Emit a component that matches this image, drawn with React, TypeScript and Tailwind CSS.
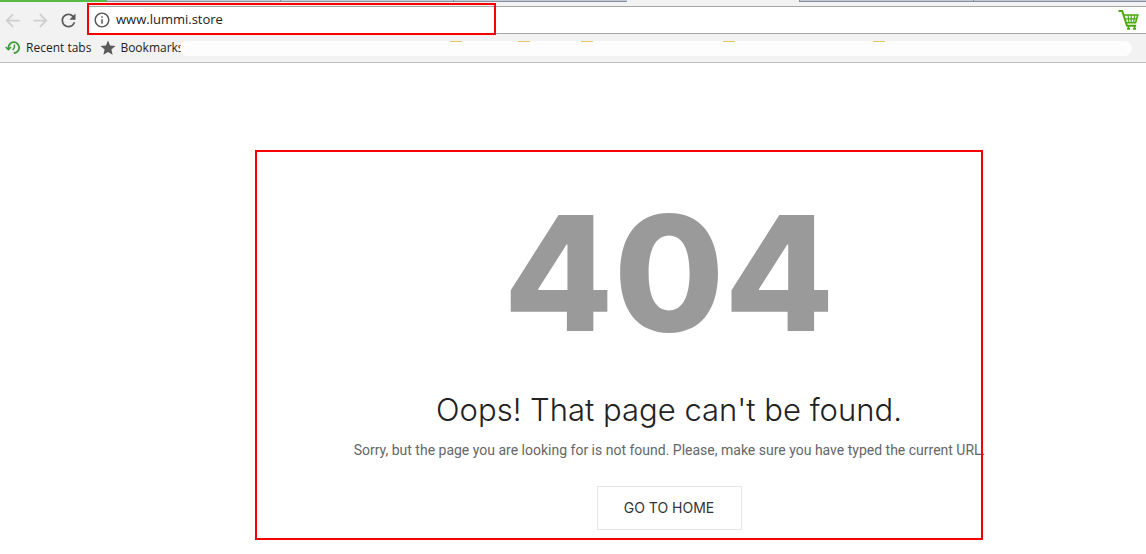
import React, { useState } from 'react';
import { MdArrowBack, MdArrowForward, MdInfoOutline, MdRefresh, MdStar } from 'react-icons/md';

const RecentIcon = () => (
  <svg className="h-4 w-4 shrink-0" viewBox="0 0 16 16" fill="none" stroke="#3f9a3a" strokeWidth="1.8" aria-hidden="true">
    <path d="M3.4 9V7.6A5.4 5.4 0 1 1 8.8 13" />
    <path d="M0.6 7L3.4 9.6L6 7" strokeWidth="1.5" />
    <path d="M9.4 4.6V7.6L7.6 10" strokeWidth="1.4" />
  </svg>
);

const CartIcon = () => (
  <svg className="h-[22px] w-[22px]" viewBox="0 0 22 22" fill="none" stroke="#4aa90c" strokeWidth="1.6" aria-hidden="true">
    <path d="M0.5 2H4.2L9 16.8H18.2" strokeWidth="2" />
    <path d="M5.5 6H19.8L17.6 13.8H8" />
    <path d="M6.6 9.8H18.6M10 6L11 13.8M13.2 6V13.8M16.6 6L15.6 13.8" strokeWidth="1.2" />
    <path d="M10.5 17V20.5M16.5 17V20.5M9 19.8H12M15 19.8H18" strokeWidth="1.8" />
  </svg>
);

const TabStrip = () => (
  <div className="flex h-[2px] bg-[#f2f2f2]">
    <div className="w-[107px] bg-[#58b947]" />
    <div className="w-[173px] border-b border-[#84909c] bg-[#c3cdd8]" />
    <div className="w-[173px] border-b border-l border-[#84909c] bg-[#c3cdd8]" />
    <div className="w-[174px] border-b border-l border-[#84909c] bg-[#c3cdd8]" />
    <div className="w-[172px]" />
    <div className="w-[174px] border-b border-l border-[#84909c] bg-[#c3cdd8]" />
    <div className="flex-1 border-b border-l border-[#84909c] bg-[#c3cdd8]" />
  </div>
);

const Toolbar = () => {
  const [address, setAddress] = useState('www.lummi.store');

  return (
    <div className="flex items-center pt-1">
      <div className="flex w-[88px] shrink-0 items-center gap-[7px] pl-[2px]">
        <button type="button" aria-label="Back" disabled className="text-[#cecece]">
          <MdArrowBack size={21} />
        </button>
        <button type="button" aria-label="Forward" disabled className="text-[#cecece]">
          <MdArrowForward size={21} />
        </button>
        <button type="button" aria-label="Reload" className="text-[#5a5a5a]">
          <MdRefresh size={21} />
        </button>
      </div>
      <form
        className="relative flex h-7 flex-1 items-center border-y border-[#a6a6a6] bg-white pl-[5px] pr-[6px]"
        onSubmit={(e) => e.preventDefault()}
      >
        <MdInfoOutline size={18} className="shrink-0 text-[#5a5a5a]" />
        <input
          type="text"
          aria-label="Address"
          value={address}
          onChange={(e) => setAddress(e.target.value)}
          className="ml-[5px] min-w-0 flex-1 bg-transparent font-['Open_Sans',sans-serif] text-[13px] text-[#222] outline-none"
        />
        <button type="button" aria-label="Cart">
          <CartIcon />
        </button>
        <div className="pointer-events-none absolute -left-px -top-1 h-8 w-[409px] border-2 border-[#f80000]" />
      </form>
    </div>
  );
};

const BookmarksBar = () => (
  <nav className="flex h-7 items-center pl-[5px] font-['Open_Sans',sans-serif] text-xs text-[#222]">
    <a href="#recent" className="flex shrink-0 items-center gap-[5px]">
      <RecentIcon />
      Recent tabs
    </a>
    <a href="#bookmarks" className="ml-2 flex shrink-0 items-center gap-[3px]">
      <MdStar size={18} className="text-[#5a5a5a]" />
      Bookmarks
    </a>
    <div className="relative -ml-1 mr-[14px] mt-px flex h-[15px] flex-1 rounded-full bg-[#fdfdfd]">
      <div className="ml-[270px] h-px w-3 bg-[#e3c763]" />
      <div className="ml-14 h-px w-3 bg-[#e3c763]" />
      <div className="ml-[51px] h-px w-3 bg-[#e3c763]" />
      <div className="ml-[130px] h-px w-3 bg-[#e3c763]" />
      <div className="ml-[138px] h-px w-3 bg-[#e3c763]" />
    </div>
  </nav>
);

const App: React.FC = () => {
  return (
    <div className="min-h-screen bg-white">
      <header className="border-b border-[#bfbfbf] bg-[#f2f2f2]">
        <TabStrip />
        <Toolbar />
        <BookmarksBar />
      </header>

      <main className="relative flex flex-col items-center pl-[192px] pt-[110px] text-center">
        <h1 className="font-['Inter',sans-serif] text-[160px] font-extrabold leading-[200px] text-[#9a9a9a]">404</h1>
        <h2 className="mt-[17px] font-['Inter',sans-serif] text-[31px] font-light leading-10 text-[#222]">
          Oops! That page can't be found.
        </h2>
        <p className="mt-2 whitespace-nowrap pl-px font-['Roboto',sans-serif] text-sm leading-6 text-[#666]">
          Sorry, but the page you are looking for is not found. Please, make sure you have typed the current URL.
        </p>
        <a
          href="#home"
          className="mt-6 flex h-11 w-[145px] items-center justify-center border border-[#e5e5e5] font-['Inter',sans-serif] text-sm text-[#333]"
        >
          GO TO HOME
        </a>
        <div className="pointer-events-none absolute left-[255px] top-[87px] h-[390px] w-[728px] border-2 border-[#f80000]" />
      </main>
    </div>
  );
};

export default App;
